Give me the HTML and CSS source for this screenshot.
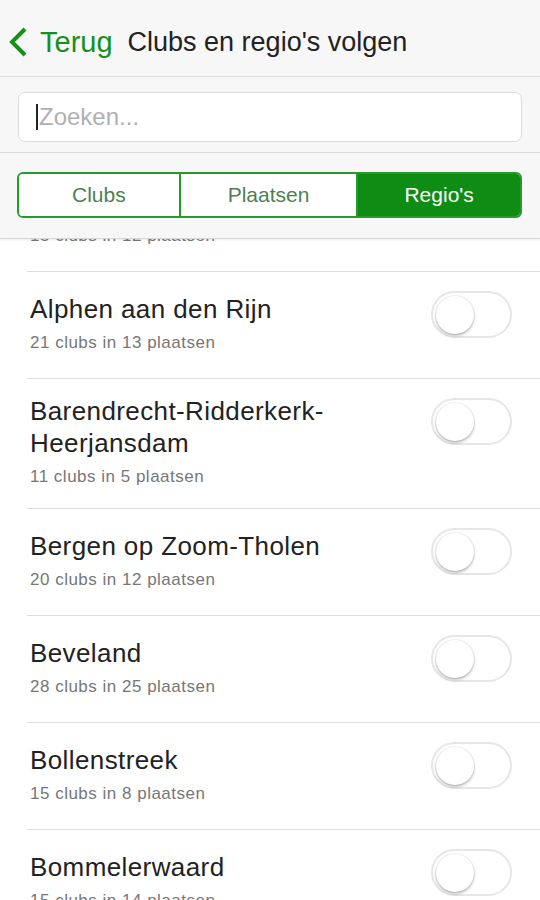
FILE: index.html
```html
<!DOCTYPE html>
<html lang="nl">

<head>
    <meta charset="UTF-8">
    <title>Clubs en regio's volgen</title>
    <link rel="stylesheet" href="styles.css">
</head>

<body>

    <header class="topbalk">
        <a class="terug" href="#">
            <svg width="20" height="30" viewBox="0 0 20 30">
                <polyline points="17,2 4,15 17,28" fill="none" stroke="#16901c" stroke-width="4" />
            </svg>
            <span>Terug</span>
        </a>
        <h1>Clubs en regio's volgen</h1>
    </header>

    <div class="zoekbalk">
        <label class="zoek">
            <span class="caret"></span>
            <input type="text" placeholder="Zoeken...">
        </label>
    </div>

    <nav class="tabbalk">
        <div class="tabs">
            <button class="tab">Clubs</button>
            <button class="tab">Plaatsen</button>
            <button class="tab valgt">Regio's</button>
        </div>
    </nav>

    <main class="lijst">
        <ul class="regios">
            <li class="regio">
                <div class="tekst">
                    <h2>Alblasserwaard</h2>
                    <p>15 clubs in 12 plaatsen</p>
                </div>
                <span class="schakelaar"><span class="knop"></span></span>
            </li>
            <li class="regio">
                <div class="tekst">
                    <h2>Alphen aan den Rijn</h2>
                    <p>21 clubs in 13 plaatsen</p>
                </div>
                <span class="schakelaar"><span class="knop"></span></span>
            </li>
            <li class="regio">
                <div class="tekst">
                    <h2>Barendrecht-Ridderkerk-<br>Heerjansdam</h2>
                    <p>11 clubs in 5 plaatsen</p>
                </div>
                <span class="schakelaar"><span class="knop"></span></span>
            </li>
            <li class="regio">
                <div class="tekst">
                    <h2>Bergen op Zoom-Tholen</h2>
                    <p>20 clubs in 12 plaatsen</p>
                </div>
                <span class="schakelaar"><span class="knop"></span></span>
            </li>
            <li class="regio">
                <div class="tekst">
                    <h2>Beveland</h2>
                    <p>28 clubs in 25 plaatsen</p>
                </div>
                <span class="schakelaar"><span class="knop"></span></span>
            </li>
            <li class="regio">
                <div class="tekst">
                    <h2>Bollenstreek</h2>
                    <p>15 clubs in 8 plaatsen</p>
                </div>
                <span class="schakelaar"><span class="knop"></span></span>
            </li>
            <li class="regio">
                <div class="tekst">
                    <h2>Bommelerwaard</h2>
                    <p>15 clubs in 14 plaatsen</p>
                </div>
                <span class="schakelaar"><span class="knop"></span></span>
            </li>
        </ul>
    </main>

</body>

</html>
```

FILE: styles.css
```css
* {
    box-sizing: border-box;
}

body {
    margin: 0;
    height: 900px;
    overflow: hidden;
    display: flex;
    flex-direction: column;
    background-color: white;
    font-family: "Liberation Sans", Arial, sans-serif;
    color: #222;
}

/* bovenste balk */

.topbalk {
    height: 77px;
    padding: 8px 0 0 8px;
    display: flex;
    align-items: center;
    background-color: #f7f7f7;
    border-bottom: 1px solid #dcdcdc;
}

.terug {
    display: flex;
    align-items: center;
    gap: 12px;
    color: #16901c;
    text-decoration: none;
    font-size: 29px;
}

.terug svg {
    display: block;
}

h1 {
    margin: 0 0 0 15px;
    font-size: 27px;
    font-weight: normal;
    color: #222;
}

/* zoeken */

.zoekbalk {
    padding: 15px 18px 10px 18px;
    background-color: #f7f7f7;
    border-bottom: 1px solid #dcdcdc;
}

.zoek {
    height: 50px;
    display: flex;
    align-items: center;
    padding-left: 17px;
    background-color: white;
    border: 1px solid #dcdcdc;
    border-radius: 7px;
}

.caret {
    width: 2px;
    height: 26px;
    background-color: #222;
}

.zoek input {
    flex: 1;
    min-width: 0;
    border: none;
    outline: none;
    padding: 0 0 0 1px;
    font-family: inherit;
    font-size: 24px;
    color: #222;
    background: transparent;
}

.zoek input::placeholder {
    color: #b0b0b0;
}

/* tabs */

.tabbalk {
    position: relative;
    z-index: 1;
    padding: 19px 18px 20px 17px;
    background-color: #f7f7f7;
    border-bottom: 1px solid #d6d6d6;
    box-shadow: 0 1px 2px rgba(0, 0, 0, .08);
}

.tabs {
    height: 46px;
    display: grid;
    grid-template-columns: 161fr 179fr 165fr;
    border: 2px solid #279a2b;
    border-radius: 6px;
    background-color: white;
}

.tab {
    min-width: 0;
    padding: 0;
    border: none;
    border-left: 2px solid #279a2b;
    background: white;
    font-family: inherit;
    font-size: 21px;
    line-height: 24px;
    color: #4e7f52;
    cursor: pointer;
}

.tab:first-child {
    border-left: none;
    border-radius: 4px 0 0 4px;
}

.valgt {
    background-color: #0f8c14;
    color: white;
    border-radius: 0 4px 4px 0;
}

/* lijst */

.lijst {
    flex: 1;
    overflow: hidden;
}

.regios {
    list-style: none;
    margin: -74px 0 0 27px;
    padding: 0;
}

.regio {
    min-height: 107px;
    padding: 16px 28px 21px 3px;
    display: flex;
    align-items: center;
    justify-content: space-between;
    border-bottom: 1px solid #dedede;
}

.tekst h2 {
    margin: 0;
    font-size: 26px;
    line-height: 32px;
    font-weight: normal;
    letter-spacing: 0.4px;
    color: #222;
}

.tekst p {
    margin: 8px 0 0 0;
    font-size: 17px;
    line-height: 20px;
    letter-spacing: 0.5px;
    color: #777;
}

.schakelaar {
    align-self: flex-start;
    margin-top: 3px;
    width: 81px;
    height: 47px;
    padding: 3px;
    border: 2px solid #e6e6e6;
    border-radius: 24px;
    background-color: white;
}

.knop {
    display: block;
    width: 38px;
    height: 38px;
    border-radius: 50%;
    background-color: white;
    box-shadow: 0 2px 3px rgba(0, 0, 0, .25), 0 0 0 1px rgba(0, 0, 0, .06);
}
```
